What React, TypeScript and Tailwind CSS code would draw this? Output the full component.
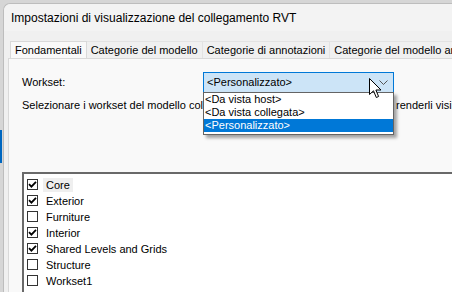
import React from 'react';

const worksets = [
  { name: 'Core', checked: true, focused: true },
  { name: 'Exterior', checked: true },
  { name: 'Furniture', checked: false },
  { name: 'Interior', checked: true },
  { name: 'Shared Levels and Grids', checked: true },
  { name: 'Structure', checked: false },
  { name: 'Workset1', checked: false },
];

const tabs = ['Fondamentali', 'Categorie del modello', 'Categorie di annotazioni', 'Categorie del modello analitico'];

const options = ['<Da vista host>', '<Da vista collegata>', '<Personalizzato>'];

const CheckBox = ({ checked }: { checked: boolean }) => (
  <div className="w-[11px] h-[11px] border border-[#333] bg-white flex items-center justify-center">
    {checked && (
      <svg width="9" height="9" viewBox="0 0 9 9">
        <path d="M1 4.2 L3.4 6.6 L8 1.8" stroke="#000" strokeWidth="1.8" fill="none" />
      </svg>
    )}
  </div>
);

const Cursor = () => (
  <svg width="13" height="21" viewBox="0 0 13 21" className="absolute left-[369px] top-[78px]">
    <path
      d="M0.5 0.5 L0.5 16.5 L4.5 12.8 L7.3 19.5 L9.6 18.5 L6.9 12 L12 12 Z"
      fill="#fff"
      stroke="#000"
      strokeWidth="1"
      strokeLinejoin="round"
    />
  </svg>
);

export default function App() {
  return (
    <div className="relative w-[452px] h-[292px] overflow-hidden bg-[#d6d6d6] font-['Liberation_Sans',Arial,sans-serif] text-[11px] text-[#000]">
      <div className="absolute left-0 top-[130px] w-[2px] h-[33px] bg-[#0067c0]" />
      <div className="ml-[3px] mt-[3px] h-[289px] rounded-tl-[7px] border-l border-t border-[#bdbdbd] bg-[#f0f0f0] flex flex-col">
        {/* Title */}
        <div className="h-[27px] flex items-center pl-[7px] text-[12px] bg-[#f3f3f3] rounded-tl-[7px]">
          Impostazioni di visualizzazione del collegamento RVT
        </div>

        <div className="pl-[4px] pt-[10px] flex flex-col flex-1">
          {/* Tabs */}
          <div className="flex h-[17px] pl-[2px] overflow-hidden">
            {tabs.map((t, i) => (
              <div
                key={t}
                className={`px-[4px] flex items-center whitespace-nowrap border-r border-[#d9d9d9] ${
                  i === 0 ? 'bg-[#f9f9f9] border-l border-t' : 'bg-[#f0f0f0] border-t border-[#e3e3e3]'
                }`}
              >
                {t}
              </div>
            ))}
          </div>

          {/* Panel */}
          <div className="flex-1 bg-[#f9f9f9] border-l border-t border-[#d9d9d9] flex flex-col pl-[13px]">
            <div className="flex items-center mt-[13px] h-[21px]">
              <span className="w-[181px]">Workset:</span>
              <div className="w-[191px] h-[21px] bg-[#cce4f7] border border-[#0078d7] flex items-center justify-between pl-[3px] pr-[5px]">
                <span>&lt;Personalizzato&gt;</span>
                <svg width="9" height="5" viewBox="0 0 9 5">
                  <path d="M0.5 0.5 L4.5 4.5 L8.5 0.5" stroke="#555" fill="none" />
                </svg>
              </div>
            </div>
            <div className="mt-[4px] flex whitespace-nowrap">
              <span className="w-[181px] shrink-0 overflow-hidden">Selezionare i workset del modello collegato</span>
              <span className="ml-[193px] shrink-0">renderli visibili</span>
            </div>

            {/* Worksets list */}
            <div className="mt-[58px] flex-1 bg-white border-l-2 border-t-2 border-[#696969] pt-[3px] pl-[3px]">
              {worksets.map((w) => (
                <div key={w.name} className="h-[16px] flex items-center">
                  <CheckBox checked={w.checked} />
                  <span className={`ml-[5px] px-[3px] leading-[14px] ${w.focused ? 'bg-[#efefef]' : ''}`}>
                    {w.name}
                  </span>
                </div>
              ))}
            </div>
          </div>
        </div>
      </div>

      {/* Dropdown popup */}
      <div className="absolute left-[203px] top-[92px] w-[191px] h-[43px] bg-white border border-[#646464] shadow-[3px_3px_3px_rgba(0,0,0,0.35)] flex flex-col">
        {options.map((o, i) => (
          <div
            key={o}
            className={`h-[13px] leading-[13px] pl-[1px] ${i === 2 ? 'bg-[#0078d7] text-white' : ''}`}
          >
            {o}
          </div>
        ))}
      </div>

      <Cursor />
    </div>
  );
}
